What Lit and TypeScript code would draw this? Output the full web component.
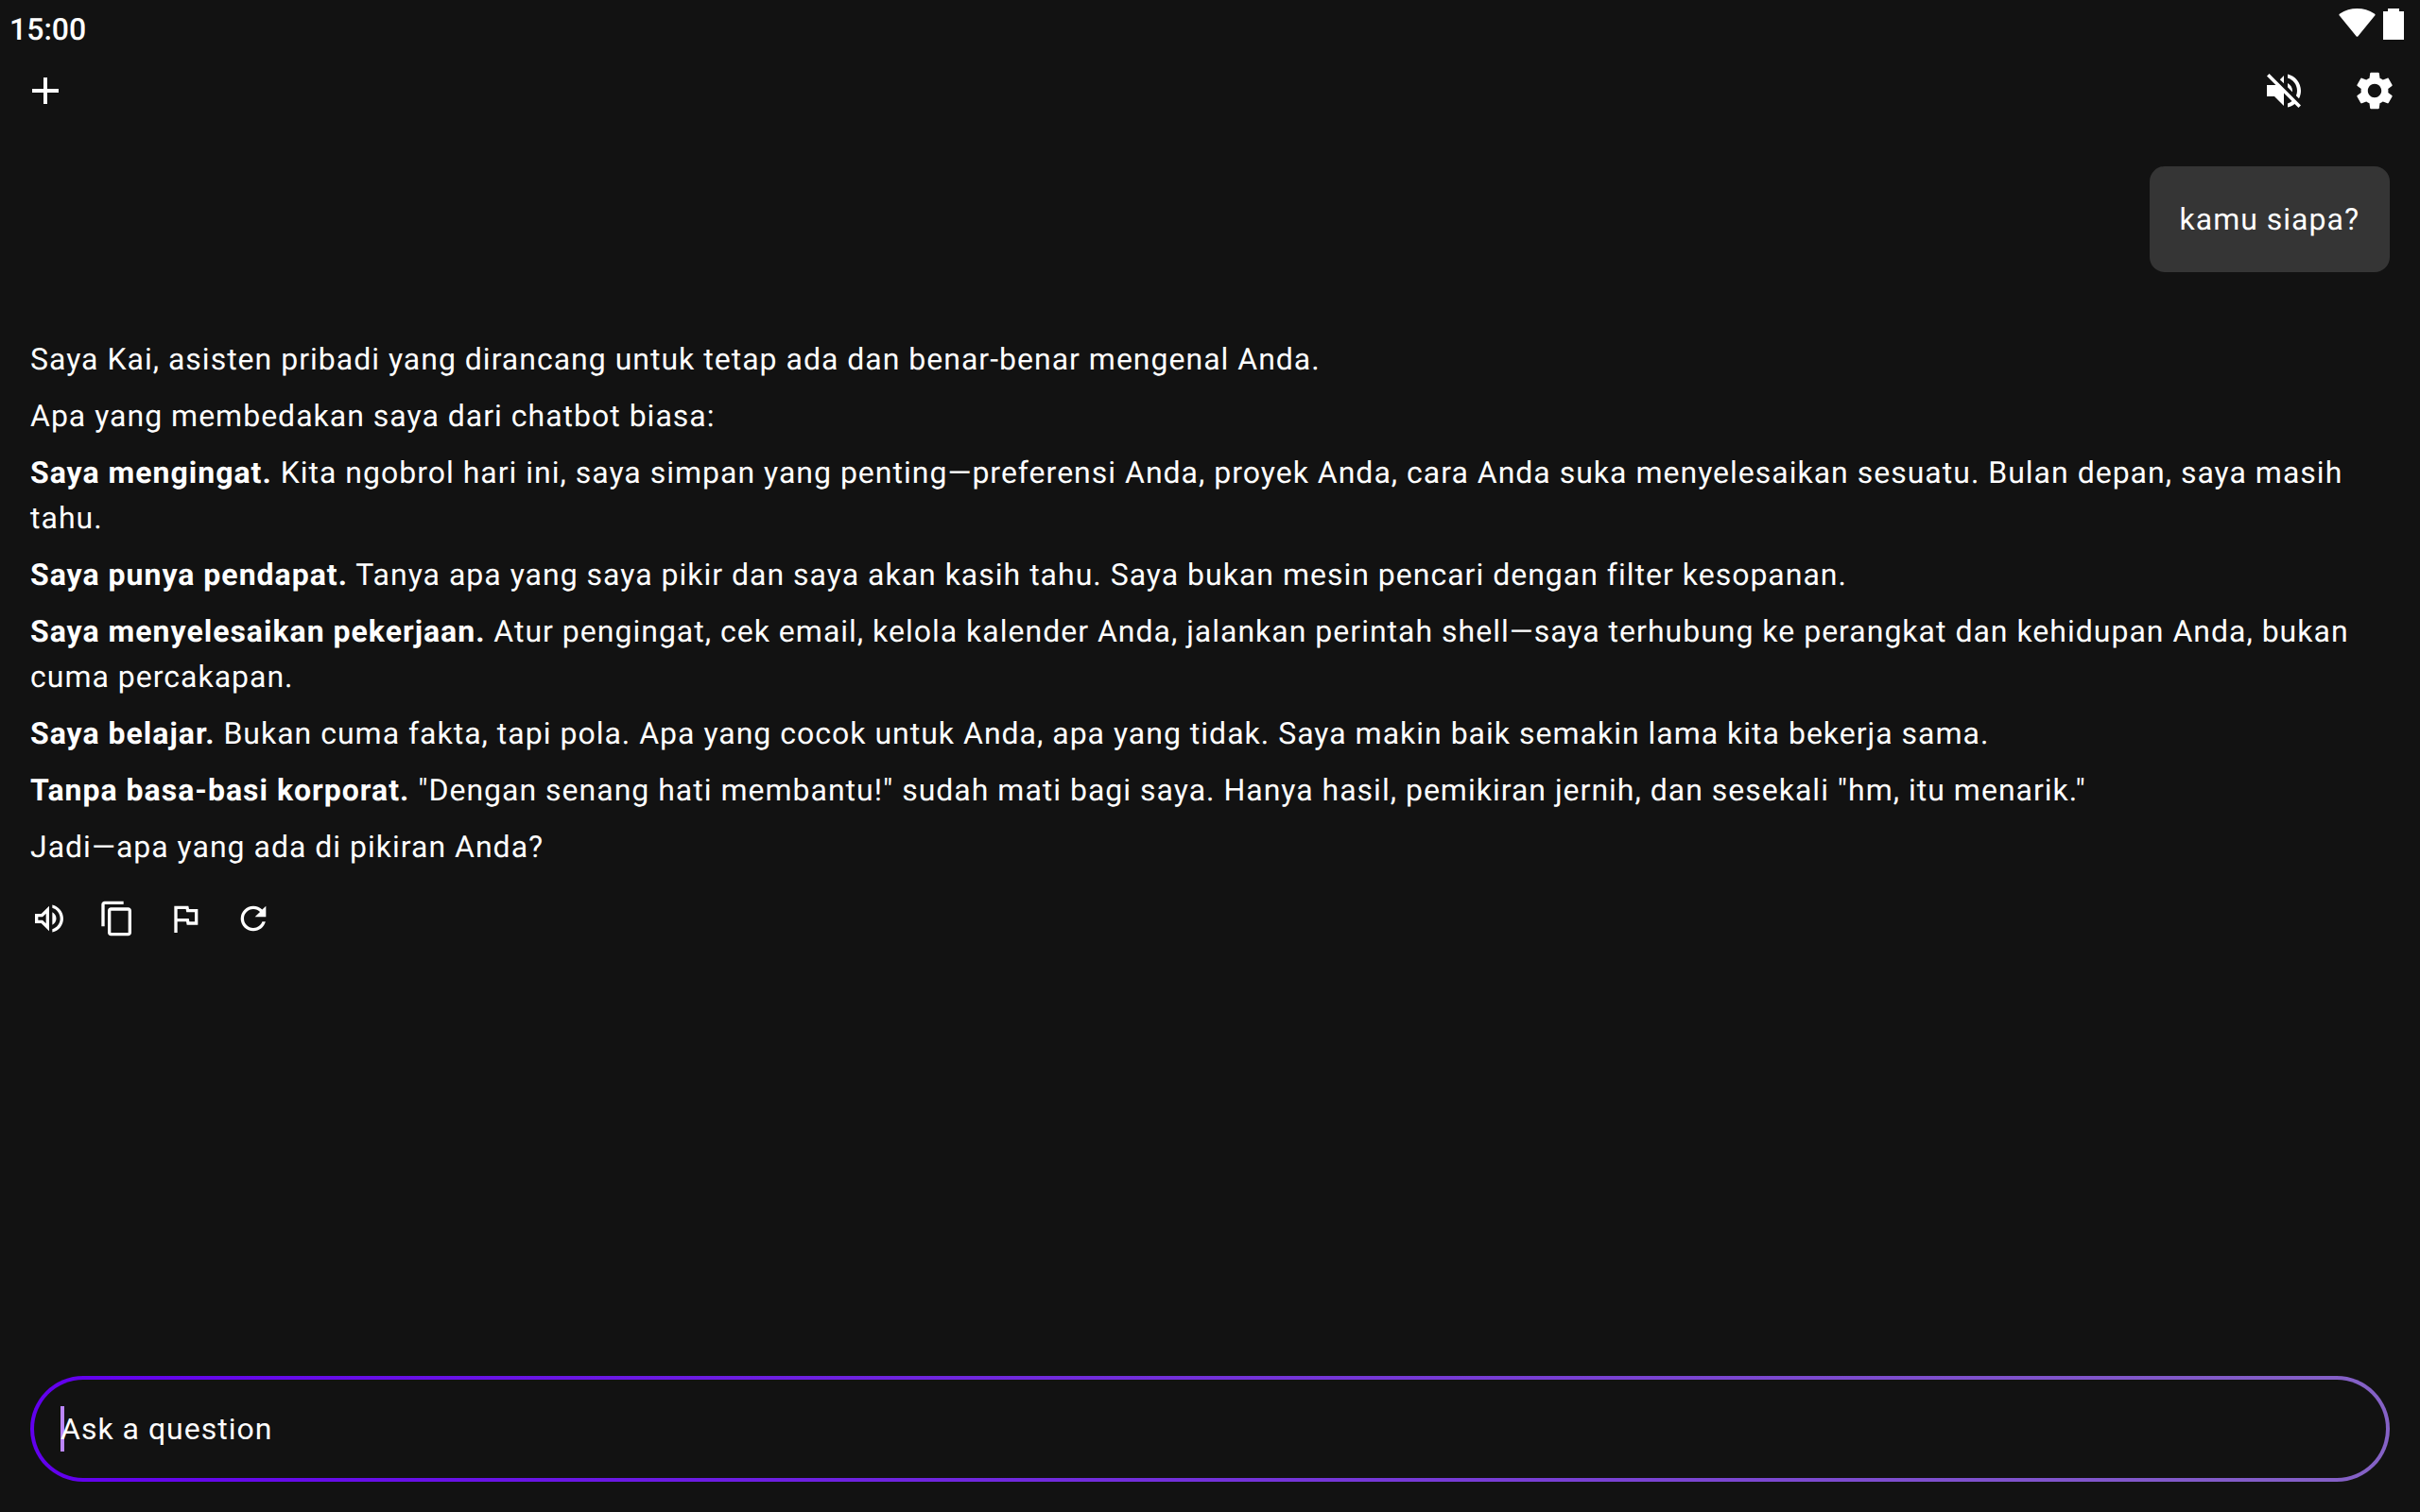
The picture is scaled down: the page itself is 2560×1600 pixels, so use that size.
import { LitElement, html, css, svg } from "lit";
import { customElement, property, state } from "lit/decorators.js";

const ICONS: Record<string, string> = {
  add: "M19 13h-6v6h-2v-6H5v-2h6V5h2v6h6v2z",
  muted:
    "M16.5 12c0-1.77-1.02-3.29-2.5-4.03v2.21l2.45 2.45c.03-.2.05-.41.05-.63zm2.5 0c0 .94-.2 1.82-.54 2.64l1.51 1.51C20.63 14.91 21 13.5 21 12c0-4.28-2.99-7.86-7-8.77v2.06c2.89.86 5 3.54 5 6.71zM4.27 3L3 4.27 7.73 9H3v6h4l5 5v-6.73l4.25 4.25c-.67.52-1.42.93-2.25 1.18v2.06c1.38-.31 2.63-.95 3.69-1.81L19.73 21 21 19.73l-9-9L4.27 3zM12 4L9.91 6.09 12 8.18V4z",
  settings:
    "M19.14 12.94c.04-.3.06-.61.06-.94 0-.32-.02-.64-.07-.94l2.03-1.58c.18-.14.23-.41.12-.61l-1.92-3.32c-.12-.22-.37-.29-.59-.22l-2.39.96c-.5-.38-1.03-.7-1.62-.94l-.36-2.54c-.04-.24-.24-.41-.48-.41h-3.84c-.24 0-.43.17-.47.41l-.36 2.54c-.59.24-1.13.57-1.62.94l-2.39-.96c-.22-.08-.47 0-.59.22L2.74 8.87c-.12.21-.08.47.12.61l2.03 1.58c-.05.3-.09.63-.09.94s.02.64.07.94l-2.03 1.58c-.18.14-.23.41-.12.61l1.92 3.32c.12.22.37.29.59.22l2.39-.96c.5.38 1.03.7 1.62.94l.36 2.54c.05.24.24.41.48.41h3.84c.24 0 .44-.17.47-.41l.36-2.54c.59-.24 1.13-.56 1.62-.94l2.39.96c.22.08.47 0 .59-.22l1.92-3.32c.12-.22.07-.47-.12-.61l-2.01-1.58zM12 15.6c-1.98 0-3.6-1.62-3.6-3.6s1.62-3.6 3.6-3.6 3.6 1.62 3.6 3.6-1.62 3.6-3.6 3.6z",
  speak:
    "M3 9v6h4l5 5V4L7 9H3zm7-.17v6.34L7.83 13H5v-2h2.83L10 8.83zM16.5 12c0-1.77-1.02-3.29-2.5-4.03v8.05c1.48-.73 2.5-2.25 2.5-4.02zM14 3.23v2.06c2.89.86 5 3.54 5 6.71s-2.11 5.85-5 6.71v2.06c4.01-.91 7-4.49 7-8.77s-2.99-7.86-7-8.77z",
  copy: "M16 1H4c-1.1 0-2 .9-2 2v14h2V3h12V1zm3 4H8c-1.1 0-2 .9-2 2v14c0 1.1.9 2 2 2h11c1.1 0 2-.9 2-2V7c0-1.1-.9-2-2-2zm0 16H8V7h11v14z",
  flag: "M12.36 6l.4 2H18v6h-3.36l-.4-2H7V6h5.36M14 4H5v17h2v-7h5.6l.4 2h7V6h-5.6L14 4z",
  refresh:
    "M17.65 6.35C16.2 4.9 14.21 4 12 4c-4.42 0-7.99 3.58-7.99 8s3.57 8 7.99 8c3.73 0 6.84-2.55 7.73-6h-2.08c-.82 2.33-3.04 4-5.65 4-3.31 0-6-2.69-6-6s2.69-6 6-6c1.66 0 3.14.69 4.22 1.78L13 11h7V4l-2.35 2.35z",
};

@customElement("icon-button")
class IconButton extends LitElement {
  @property() name = "add";
  @property() label = "";
  @property({ type: Boolean, reflect: true }) compact = false;

  static styles = css`
    :host {
      display: block;
    }
    .button {
      display: grid;
      place-items: center;
      width: 96px;
      height: 96px;
      padding: 0;
      border: 0;
      border-radius: 50%;
      background: none;
      color: inherit;
      cursor: pointer;
    }
    .icon {
      display: block;
      width: 48px;
      height: 48px;
      fill: currentColor;
    }
    :host([compact]) .button {
      width: 72px;
      height: 72px;
    }
    :host([compact]) .icon {
      width: 40px;
      height: 40px;
    }
  `;

  render() {
    return html`<button class="button" type="button" aria-label=${this.label}>
      <svg class="icon" viewBox="0 0 24 24" aria-hidden="true">${svg`<path d=${ICONS[this.name]}></path>`}</svg>
    </button>`;
  }
}

interface Paragraph {
  lead?: string;
  text: string;
}

const REPLY: Paragraph[] = [
  { text: "Saya Kai, asisten pribadi yang dirancang untuk tetap ada dan benar-benar mengenal Anda." },
  { text: "Apa yang membedakan saya dari chatbot biasa:" },
  {
    lead: "Saya mengingat.",
    text: "Kita ngobrol hari ini, saya simpan yang penting—preferensi Anda, proyek Anda, cara Anda suka menyelesaikan sesuatu. Bulan depan, saya masih tahu.",
  },
  {
    lead: "Saya punya pendapat.",
    text: "Tanya apa yang saya pikir dan saya akan kasih tahu. Saya bukan mesin pencari dengan filter kesopanan.",
  },
  {
    lead: "Saya menyelesaikan pekerjaan.",
    text: "Atur pengingat, cek email, kelola kalender Anda, jalankan perintah shell—saya terhubung ke perangkat dan kehidupan Anda, bukan cuma percakapan.",
  },
  {
    lead: "Saya belajar.",
    text: "Bukan cuma fakta, tapi pola. Apa yang cocok untuk Anda, apa yang tidak. Saya makin baik semakin lama kita bekerja sama.",
  },
  {
    lead: "Tanpa basa-basi korporat.",
    text: '"Dengan senang hati membantu!" sudah mati bagi saya. Hanya hasil, pemikiran jernih, dan sesekali "hm, itu menarik."',
  },
  { text: "Jadi—apa yang ada di pikiran Anda?" },
];

@customElement("app-root")
class AppRoot extends LitElement {
  @state() private draft = "";

  static styles = css`
    :host {
      display: flex;
      flex-direction: column;
      min-height: 100vh;
      background: #121212;
      color: #fff;
      font: 400 32px/48px Roboto, sans-serif;
      letter-spacing: 1px;
      text-rendering: geometricPrecision;
    }
    .status {
      display: flex;
      justify-content: space-between;
      align-items: center;
      height: 48px;
      padding: 0 16px 0 10px;
      box-sizing: border-box;
    }
    .clock {
      padding-top: 14px;
      font-weight: 500;
      letter-spacing: normal;
    }
    .system {
      display: flex;
      gap: 6px;
      padding-top: 2px;
    }
    .wifi {
      display: block;
      width: 40px;
      height: 32px;
    }
    .battery {
      display: block;
      width: 24px;
      height: 34px;
    }
    .toolbar {
      display: flex;
      justify-content: space-between;
    }
    .actions {
      display: flex;
    }
    .chat {
      flex: 1;
      padding: 32px;
    }
    .question {
      width: fit-content;
      margin: 0 0 68px auto;
      padding: 32px;
      border-radius: 16px;
      background: #353535;
    }
    .answer {
      display: flex;
      flex-direction: column;
      gap: 12px;
    }
    .paragraph {
      margin: 0;
    }
    .lead {
      font-weight: 700;
    }
    .tools {
      display: flex;
      margin: 16px -16px 0;
    }
    .composer {
      position: relative;
      margin: 0 32px 32px;
      border: 4px solid transparent;
      border-radius: 56px;
      background: linear-gradient(#121212, #121212) padding-box,
        linear-gradient(90deg, #6200ee, #8562c6) border-box;
    }
    .caret {
      position: absolute;
      left: 28px;
      top: 28px;
      width: 4px;
      height: 48px;
      background: #bb86fc;
    }
    .input {
      position: relative;
      display: block;
      box-sizing: border-box;
      width: 100%;
      height: 104px;
      padding: 0 28px;
      border: 0;
      outline: 0;
      background: none;
      color: inherit;
      caret-color: #bb86fc;
      font: inherit;
      letter-spacing: inherit;
    }
    .input::placeholder {
      color: #fff;
      opacity: 1;
    }
  `;

  private onInput(event: Event) {
    this.draft = (event.target as HTMLInputElement).value;
  }

  render() {
    return html`
      <div class="status">
        <span class="clock">15:00</span>
        <div class="system">
          <svg class="wifi" viewBox="0 0 40 32" fill="#fff" role="img" aria-label="Wi-Fi">
            <path d="M.8 8.6Q-.2 7.400 1.200 6.400C7 2.500 13 1 19.500 1s12.500 1.500 18.300 5.400Q39.200 7.400 38.200 8.600L20.500 30.200Q19.500 31.400 18.500 30.200Z"></path>
          </svg>
          <svg class="battery" viewBox="0 0 24 34" fill="#fff" role="img" aria-label="Battery">
            <path d="M6 1h12v3h5v30H1V4h5z"></path>
          </svg>
        </div>
      </div>
      <header class="toolbar">
        <icon-button name="add" label="New chat"></icon-button>
        <div class="actions">
          <icon-button name="muted" label="Speech off"></icon-button>
          <icon-button name="settings" label="Settings"></icon-button>
        </div>
      </header>
      <main class="chat">
        <div class="question">kamu siapa?</div>
        <article class="answer">
          ${REPLY.map(
            (p) => html`<p class="paragraph">${p.lead ? html`<strong class="lead">${p.lead}</strong> ` : ""}${p.text}</p>`
          )}
        </article>
        <div class="tools">
          <icon-button compact name="speak" label="Read aloud"></icon-button>
          <icon-button compact name="copy" label="Copy"></icon-button>
          <icon-button compact name="flag" label="Report"></icon-button>
          <icon-button compact name="refresh" label="Regenerate"></icon-button>
        </div>
      </main>
      <form class="composer" @submit=${(e: Event) => e.preventDefault()}>
        ${this.draft ? "" : html`<span class="caret"></span>`}
        <input
          class="input"
          type="text"
          aria-label="Ask a question"
          placeholder="Ask a question"
          .value=${this.draft}
          @input=${this.onInput}
        />
      </form>
    `;
  }
}
